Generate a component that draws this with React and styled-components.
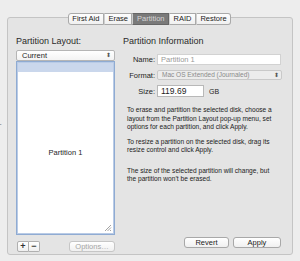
import styled, { createGlobalStyle } from "styled-components";

const GlobalStyle = createGlobalStyle`
  html, body {
    margin: 0;
    padding: 0;
    background: #ededed;
  }
  body {
    font-family: "Liberation Sans", "DejaVu Sans", sans-serif;
    color: #1e1e1e;
  }
`;

const tabs = ["First Aid", "Erase", "Partition", "RAID", "Restore"];

const paragraphs = [
  {
    lines: [
      "To erase and partition the selected disk, choose a",
      "layout from the Partition Layout pop-up menu, set",
      "options for each partition, and click Apply.",
    ],
    gap: 0,
  },
  {
    lines: [
      "To resize a partition on the selected disk, drag its",
      "resize control and click Apply.",
    ],
    gap: 6,
  },
  {
    lines: [
      "The size of the selected partition will change, but",
      "the partition won’t be erased.",
    ],
    gap: 12,
  },
];

const App = () => {
  return (
    <>
      <GlobalStyle />
      <Window>
        <Stray>-</Stray>
        <Panel>
          <TabBar>
            {tabs.map((tab, i) => (
              <Tab key={tab} active={tab === "Partition"} first={i === 0} last={i === tabs.length - 1}>
                {tab}
              </Tab>
            ))}
          </TabBar>
          <Body>
            <LeftCol>
              <Heading>Partition Layout:</Heading>
              <PopUp>
                <span>Current</span>
                <Arrows>⬍</Arrows>
              </PopUp>
              <ListBox>
                <SelectedRow />
                <PartitionName>Partition 1</PartitionName>
                <Grip viewBox="0 0 8 8">
                  <path d="M1 7 L7 1 M3.5 7 L7 3.5 M6 7 L7 6" stroke="#8c8c8c" strokeWidth="0.8" />
                </Grip>
              </ListBox>
              <BottomRow>
                <SmallGroup>
                  <SmallButton>+</SmallButton>
                  <SmallButton>−</SmallButton>
                </SmallGroup>
                <PushButton disabled width={44}>Options…</PushButton>
              </BottomRow>
            </LeftCol>
            <RightCol>
              <Heading>Partition Information</Heading>
              <FieldRow top={8}>
                <Label>Name:</Label>
                <TextField disabled>Partition 1</TextField>
              </FieldRow>
              <FieldRow top={5}>
                <Label>Format:</Label>
                <PopUpField>
                  <span>Mac OS Extended (Journaled)</span>
                  <Arrows>⬍</Arrows>
                </PopUpField>
              </FieldRow>
              <FieldRow top={5}>
                <Label>Size:</Label>
                <SizeField>119.69</SizeField>
                <Unit>GB</Unit>
              </FieldRow>
              <Help>
                {paragraphs.map((p, i) => (
                  <Para key={i} gap={p.gap}>
                    {p.lines.map((l) => (
                      <div key={l}>{l}</div>
                    ))}
                  </Para>
                ))}
              </Help>
              <ActionRow>
                <PushButton width={43}>Revert</PushButton>
                <PushButton width={46}>Apply</PushButton>
              </ActionRow>
            </RightCol>
          </Body>
        </Panel>
      </Window>
    </>
  );
};

const Window = styled.div`
  position: relative;
  width: 300px;
  height: 261px;
  padding: 17px 0 0 7px;
  box-sizing: border-box;
  background: #ededed;
  overflow: hidden;
`;

const Stray = styled.span`
  position: absolute;
  left: -1px;
  top: 119px;
  font-size: 8px;
  color: #777;
`;

const Panel = styled.div`
  width: 286px;
  height: 238px;
  box-sizing: border-box;
  border: 1px solid #c4c4c4;
  border-radius: 3px;
  background: #e4e4e4;
  display: flex;
  flex-direction: column;
`;

const TabBar = styled.div`
  display: flex;
  justify-content: center;
  margin-top: -5px;
  margin-left: -1px;
`;

const Tab = styled.div`
  height: 10px;
  line-height: 10px;
  padding: 0 3.5px;
  font-size: 7.5px;
  border: 1px solid ${(p) => (p.active ? "#666" : "#a9a9a9")};
  border-radius: ${(p) => (p.first ? "3px 0 0 3px" : p.last ? "0 3px 3px 0" : "0")};
  background: ${(p) => (p.active ? "#7a7a7a" : "linear-gradient(#fdfdfd, #f0f0f0)")};
  color: ${(p) => (p.active ? "#d6d6d6" : "#222")};
  & + & {
    border-left-color: #cfcfcf;
  }
`;

const Body = styled.div`
  flex: 1;
  display: flex;
  padding: 11px 0 0 8px;
`;

const LeftCol = styled.div`
  width: 99px;
  display: flex;
  flex-direction: column;
`;

const RightCol = styled.div`
  width: 162px;
  margin-left: 8px;
  display: flex;
  flex-direction: column;
`;

const Heading = styled.div`
  font-size: 9px;
  height: 10px;
  line-height: 10px;
  color: #2a2a2a;
`;

const PopUp = styled.div`
  margin-top: 4px;
  height: 9px;
  box-sizing: content-box;
  border: 1px solid #b5b5b5;
  border-radius: 2px;
  background: linear-gradient(#ffffff, #f3f3f3);
  display: flex;
  align-items: center;
  justify-content: space-between;
  padding: 0 3px 0 5px;
  font-size: 7.5px;
  line-height: 9px;
`;

const Arrows = styled.span`
  font-size: 6px;
  color: #555;
`;

const ListBox = styled.div`
  position: relative;
  height: 172px;
  border: 1px solid #8fabd2;
  box-shadow: inset 0 0 0 1px #b9cbe6;
  background: #fff;
  display: flex;
  flex-direction: column;
`;

const SelectedRow = styled.div`
  height: 9px;
  margin: 1px 1px 0;
  background: #cad7ec;
`;

const PartitionName = styled.div`
  flex: 1;
  display: flex;
  align-items: center;
  justify-content: center;
  font-size: 7.5px;
  padding-bottom: 2px;
`;

const Grip = styled.svg`
  position: absolute;
  right: 2px;
  bottom: 2px;
  width: 8px;
  height: 8px;
`;

const BottomRow = styled.div`
  margin-top: 6px;
  display: flex;
  align-items: center;
  justify-content: space-between;
`;

const SmallGroup = styled.div`
  display: flex;
  margin-left: 1px;
`;

const SmallButton = styled.div`
  width: 10px;
  height: 9px;
  border: 1px solid #b0b0b0;
  background: linear-gradient(#ffffff, #efefef);
  font-size: 9px;
  font-weight: bold;
  line-height: 9px;
  text-align: center;
  color: #333;
  & + & {
    border-left: none;
  }
  &:first-child {
    border-radius: 2px 0 0 2px;
  }
  &:last-child {
    border-radius: 0 2px 2px 0;
  }
`;

const PushButton = styled.div`
  width: ${(p) => p.width}px;
  height: 9px;
  box-sizing: content-box;
  border: 1px solid ${(p) => (p.disabled ? "#c6c6c6" : "#a8a8a8")};
  border-radius: 3px;
  background: linear-gradient(#ffffff, #f0f0f0);
  font-size: 7.5px;
  line-height: 9px;
  text-align: center;
  color: ${(p) => (p.disabled ? "#a5a5a5" : "#222")};
`;

const FieldRow = styled.div`
  margin-top: ${(p) => p.top}px;
  display: flex;
  align-items: center;
`;

const Label = styled.div`
  width: 32px;
  text-align: right;
  font-size: 7.5px;
  margin-right: 2px;
`;

const TextField = styled.div`
  width: 119px;
  height: 9px;
  border: 1px solid #d2d2d2;
  background: #fff;
  font-size: 7.5px;
  line-height: 9px;
  padding-left: 3px;
  color: #9a9a9a;
`;

const PopUpField = styled.div`
  width: 117px;
  height: 8px;
  border: 1px solid #c9c9c9;
  border-radius: 2px;
  background: #ececec;
  font-size: 6.5px;
  line-height: 8px;
  padding: 0 2px 0 4px;
  display: flex;
  justify-content: space-between;
  color: #8a8a8a;
`;

const SizeField = styled.div`
  width: 42px;
  height: 10px;
  border: 1px solid #b8b8b8;
  background: #fff;
  font-size: 8.5px;
  line-height: 10px;
  padding-left: 3px;
`;

const Unit = styled.div`
  margin-left: 5px;
  font-size: 7px;
`;

const Help = styled.div`
  margin-top: 9px;
  margin-left: 4px;
  font-size: 6.6px;
  line-height: 8.5px;
  color: #222;
`;

const Para = styled.div`
  margin-top: ${(p) => p.gap}px;
`;

const ActionRow = styled.div`
  margin-top: auto;
  margin-bottom: 6px;
  display: flex;
  justify-content: flex-end;
  gap: 4px;
  margin-right: 4px;
`;

export default App;
